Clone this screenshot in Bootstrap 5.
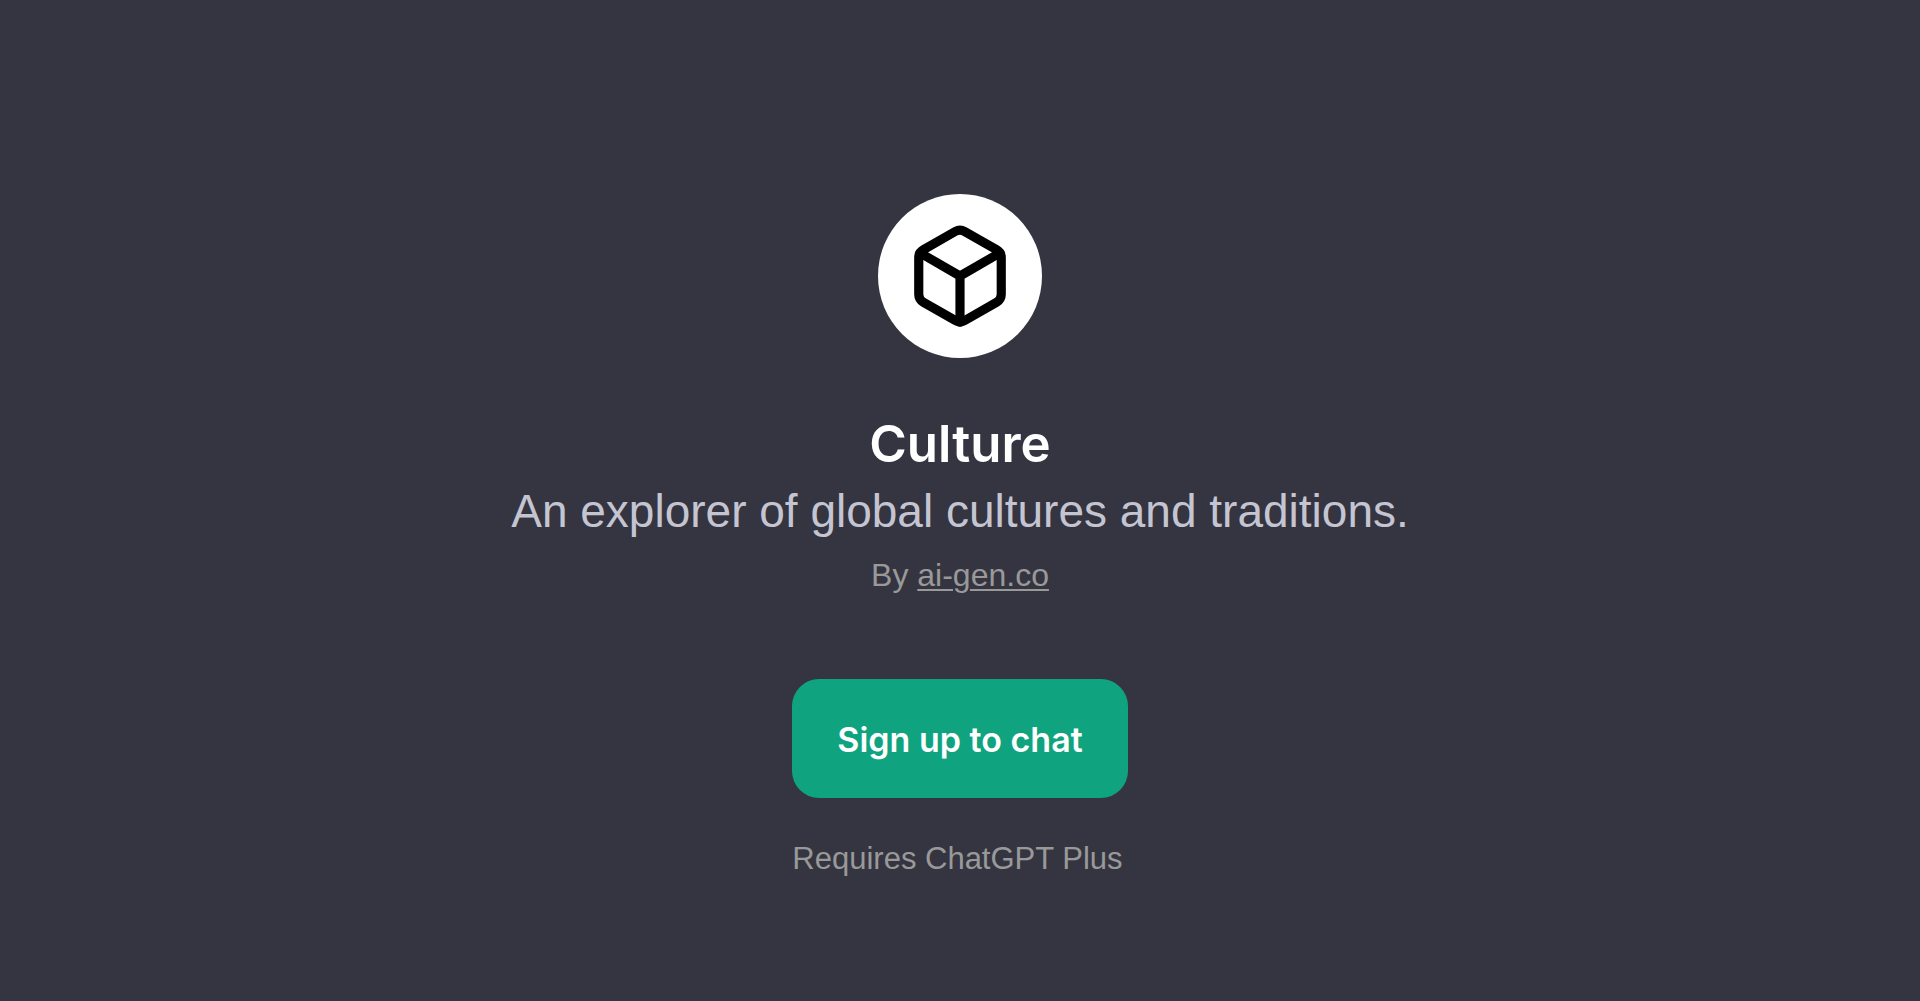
<!DOCTYPE html>
<html lang="en">
<head>
<meta charset="utf-8">
<meta name="viewport" content="width=device-width, initial-scale=1">
<title>Culture</title>
<link href="https://cdn.jsdelivr.net/npm/bootstrap@5.3.0/dist/css/bootstrap.min.css" rel="stylesheet">
<style>
  body { background: #343541; font-family: "Liberation Sans", Arial, sans-serif; }
  .landing { padding-top: 194px; }
  .avatar { width: 164px; height: 164px; margin-bottom: 54px; }
  .gpt-name { font-family: Inter, "Liberation Sans", sans-serif; font-size: 51px; line-height: 64px; font-weight: 600; }
  .gpt-about { font-size: 46px; line-height: 70px; color: #c5c5d2; }
  .gpt-author { font-size: 32px; line-height: 58px; color: #999; margin-bottom: 75px; }
  .gpt-author a { text-decoration-thickness: 2px; text-underline-offset: 3px; }
  .btn-signup {
    --bs-btn-color: #fff; --bs-btn-bg: #10a37f; --bs-btn-hover-color: #fff; --bs-btn-hover-bg: #1a7f64;
    --bs-btn-active-color: #fff; --bs-btn-active-bg: #1a7f64;
    --bs-btn-border-width: 0; --bs-btn-border-radius: 27px;
    --bs-btn-font-family: Inter, "Liberation Sans", sans-serif;
    --bs-btn-font-size: 34px; --bs-btn-line-height: 48px; --bs-btn-font-weight: 600;
    padding: 37px 45px 34px;
    margin-bottom: 37px;
  }
  .requirement { font-size: 31px; line-height: 48px; color: #999; }
</style>
</head>
<body>
<main class="landing container-fluid d-flex flex-column align-items-center text-center">
  <div class="avatar rounded-circle bg-white d-flex align-items-center justify-content-center">
    <svg width="110" height="110" viewBox="0 0 24 24" fill="none" stroke="#000" stroke-width="2" stroke-linecap="round" stroke-linejoin="round" aria-hidden="true">
      <path d="M21 16V8a2 2 0 0 0-1-1.730l-7-4a2 2 0 0 0-2 0l-7 4A2 2 0 0 0 3 8v8a2 2 0 0 0 1 1.730l7 4a2 2 0 0 0 2 0l7-4A2 2 0 0 0 21 16z"/>
      <path d="M3.270 6.960 12 12.010l8.730-5.050M12 22.080V12"/>
    </svg>
  </div>
  <h1 class="gpt-name text-white mb-0">Culture</h1>
  <p class="gpt-about mb-0">An explorer of global cultures and traditions.</p>
  <p class="gpt-author">By <a class="text-reset" href="#">ai-gen.co</a></p>
  <div class="d-flex flex-column align-items-start">
    <button type="button" class="btn btn-signup">Sign up to chat</button>
    <p class="requirement mb-0">Requires ChatGPT Plus</p>
  </div>
</main>
<script src="https://cdn.jsdelivr.net/npm/bootstrap@5.3.0/dist/js/bootstrap.bundle.min.js"></script>
</body>
</html>
